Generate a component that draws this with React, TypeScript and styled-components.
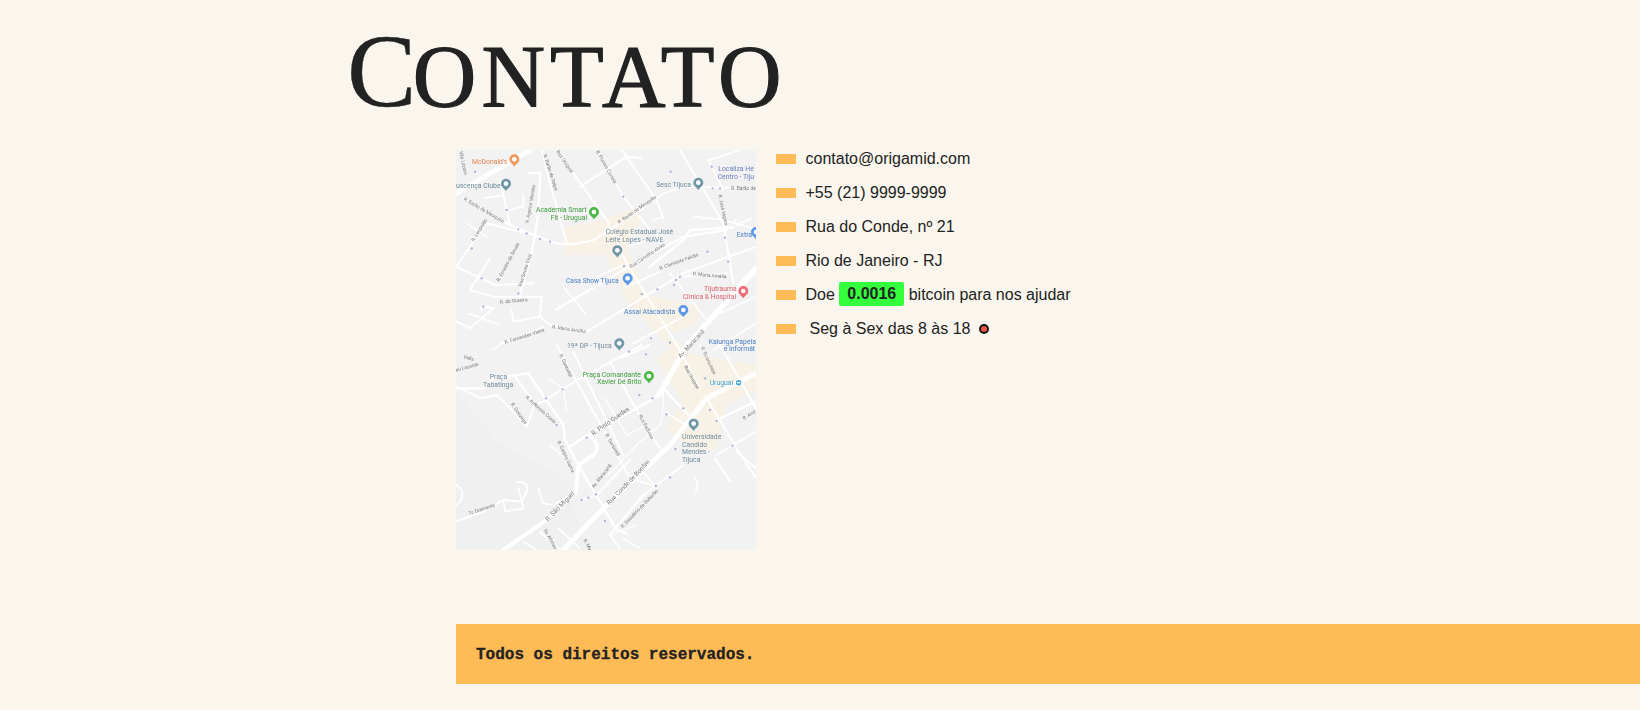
import React from "react";
import styled, { createGlobalStyle } from "styled-components";

const Global = createGlobalStyle`
  html, body { margin: 0; padding: 0; background: #faf6ed; }
  body { font-family: "Liberation Sans", Arial, sans-serif; color: #222; height: 710px; overflow: hidden; }
`;

const Page = styled.div`
  display: flex;
  flex-direction: column;
  width: 1640px;
  height: 710px;
`;

const Title = styled.h1`
  margin: 0;
  height: 150px;
  padding: 21px 0 0 347px;
  box-sizing: border-box;
  font-family: "Liberation Serif", "Times New Roman", serif;
  font-weight: 400;
  font-size: 88px;
  line-height: 100px;
  letter-spacing: 5.1px;
  color: #222;
  -webkit-text-stroke: 1.2px #222;
  text-transform: uppercase;
  white-space: nowrap;
`;

const Initial = styled.span`
  font-size: 104px;
  letter-spacing: -3.6px;
  -webkit-text-stroke: 0.4px #222;
`;

const Content = styled.section`
  display: flex;
  gap: 20px;
  padding-left: 456px;
`;

const MapFrame = styled.div`
  width: 300px;
  height: 400px;
  flex: none;
  background: #f2f2f2;
`;

const MapSvg = styled.svg`
  display: block;
  width: 300px;
  height: 400px;
  filter: blur(0.35px);
`;

const List = styled.ul`
  display: flex;
  flex-direction: column;
  gap: 16px;
  list-style: none;
  margin: 0;
  padding: 0;
  font-size: 16px;
`;

const Row = styled.li`
  display: flex;
  align-items: center;
  gap: 9.5px;
  height: 18px;
  line-height: 20px;
  white-space: pre;
  &::before {
    content: "";
    width: 20px;
    height: 10px;
    background: #ffbb55;
    flex: none;
  }
`;

const RowText = styled.span`
  display: inline-block;
`;

const Price = styled.span`
  display: inline-block;
  padding: 2px 8px;
  background: #33ff3c;
  border-radius: 2px;
  font-weight: 700;
  position: relative;
  top: -1px;
`;

const HoursText = styled.span`
  padding-left: 4px;
`;

const Dot = styled.span`
  width: 10px;
  height: 10px;
  box-sizing: border-box;
  border: 2px solid #111;
  background: #ee5544;
  border-radius: 50%;
  margin-left: -1px;
  flex: none;
`;

const Footer = styled.footer`
  display: flex;
  align-items: center;
  height: 60px;
  margin: 74px 0 0 456px;
  padding: 2px 0 0 20px;
  box-sizing: border-box;
  background: #ffbb55;
  font-family: "Liberation Mono", "Courier New", monospace;
  font-size: 16px;
  font-weight: 700;
  color: #222;
  -webkit-text-stroke: 0.3px #222;
`;

const roadsA: [string, number][] = [
  ["M18,160 L240,30", 15],
  ["M700,630 L918,385", 17],
  ["M40,175 L180,255 L300,305 Q350,322 430,300 L510,250 L640,160 L700,140 L918,145", 6],
  ["M320,30 L470,240 L530,370 L690,630", 6],
  ["M275,30 L300,130 L350,310", 6],
  ["M440,30 L520,170 L600,270", 6],
  ["M515,30 L620,180 L640,235", 6],
  ["M390,140 L530,50 L575,55", 6],
  ["M690,30 L820,250 L850,430", 6],
  ["M775,60 L820,150", 6],
  ["M780,60 L870,30", 5],
  ["M235,100 L272,98 L265,210 Q258,310 205,480", 7],
  ["M150,120 L180,255", 6],
  ["M100,175 L160,165", 5],
  ["M180,210 L220,200 L220,165", 5],
  ["M18,380 L135,435 L250,430", 6],
  ["M18,380 L110,250 L230,280", 6],
  ["M50,250 L110,290", 5],
  ["M120,355 L60,450 L130,470 L275,470", 6],
  ["M275,470 L270,530 L300,555 L410,575 L700,400 L918,320", 6],
  ["M90,510 L100,500 L130,505 L60,565 L20,545", 6],
  ["M55,520 L150,555", 5],
  ["M185,510 L190,545 L270,530", 5],
  ["M320,508 L530,385 L700,290 L830,270", 7],
  ["M340,440 L405,520", 5],
  ["M440,410 L520,375", 5],
  ["M520,445 L630,395", 5],
  ["M600,380 L700,300 L720,270 L850,262", 7],
  ["M735,230 L820,240 L910,265", 5],
  ["M855,240 L860,255 L905,235", 5],
  ["M700,410 L830,400", 5],
  ["M660,400 L770,540", 5],
  ["M810,520 L918,470", 5],
  ["M790,630 L918,550", 5],
  ["M160,610 L200,595 L280,560", 5],
  ["M130,630 L160,605", 5],
  ["M550,610 L700,530", 5],
  ["M530,320 L640,290", 4],
  ["M610,240 L640,230", 4],
];

const roadsB: [string, number][] = [
  ["M340,615 L470,480 L660,300 L770,160 L918,85", 15],
  ["M715,-5 L650,110 L625,150", 16],
  ["M630,150 L560,190 L405,275 L360,305", 8],
  ["M422,270 Q455,305 430,330 L385,360 L378,440 L290,525 L160,615", 12],
  ["M320,0 L540,400 L620,425", 6],
  ["M370,20 L520,330", 6],
  ["M480,50 L590,250 L630,310", 6],
  ["M510,40 L600,0", 6],
  ["M18,130 L100,130 L130,100 L235,85 L340,240 L345,285 L385,360 L500,555 L530,565", 7],
  ["M195,95 L255,175 L230,245 L190,200 L140,150 L95,160 L20,125", 6],
  ["M260,180 L375,110 L575,0", 6],
  ["M300,105 L340,130 L350,200", 4],
  ["M640,130 L720,215", 7],
  ["M770,160 L860,310 L918,400", 6],
  ["M650,205 L700,235", 5],
  ["M800,225 L918,170", 6],
  ["M810,0 L918,190", 6],
  ["M800,330 L850,300 L918,260", 6],
  ["M795,340 L840,410", 6],
  ["M860,320 L918,370", 6],
  ["M640,130 Q640,220 630,240 L570,290 L470,395", 4],
  ["M530,270 L590,240", 4],
  ["M465,160 L530,270", 4],
  ["M680,0 L750,130", 5],
  ["M750,0 L780,60", 4],
  ["M580,380 L620,430", 5],
  ["M700,360 L580,450 L480,570 L510,610", 6],
  ["M735,400 Q750,420 735,440", 4],
  ["M395,465 L440,450 L540,345", 6],
  ["M200,410 Q240,410 230,440 L215,470 L160,465 L100,500 L18,530", 6],
  ["M160,465 L165,500 L220,490 L205,430", 5],
  ["M265,430 L280,475 L310,480 L380,440", 5],
  ["M270,560 L330,615", 5],
  ["M220,590 L260,615", 5],
  ["M325,550 L390,610", 5],
  ["M520,580 L570,610", 4],
  ["M18,420 Q50,440 30,470 L18,480", 5],
  ["M300,300 L360,350", 4],
  ["M480,570 L560,540", 3],
];

/* text, x, y, colour, rotation, size */
type Lbl = [string, number, number, string, number, number];

const poi = "#6f8b9b";
const grn = "#3c9c3c";
const blu = "#4a80c8";
const pnk = "#d9626c";
const st = "#777";

const labelsA: Lbl[] = [
  ["McDonald's", 66, 71, "#e2854f", 0, 20.5],
  ["uscença Clube", 18, 143, poi, 0, 20.5],
  ["Academia Smart", 258, 217, grn, 0, 20.5],
  ["Fit - Uruguai", 302, 240, grn, 0, 20.5],
  ["Colégio Estadual José", 467, 283, poi, 0, 20.5],
  ["Leite Lopes - NAVE", 467, 306, poi, 0, 20.5],
  ["Sesc Tijuca", 619, 141, poi, 0, 20.5],
  ["Localiza He", 805, 93, "#6c7fc0", 0, 20.5],
  ["Centro - Tiju", 803, 116, "#6c7fc0", 0, 20.5],
  ["Extra", 860, 291, blu, 0, 20.5],
  ["Casa Show Tijuca", 348, 428, blu, 0, 20],
  ["Tijutrauma", 762, 452, pnk, 0, 20.5],
  ["Clínica & Hospital", 698, 476, pnk, 0, 20.5],
  ["Assaí Atacadista", 522, 521, blu, 0, 20.5],
  ["19ª DP - Tijuca", 351, 623, poi, 0, 20.5],
  ["Kalunga Papela", 776, 611, blu, 0, 20.5],
  ["R. Barão de Mesquita", 40, 180, st, 30, 14.5],
  ["R. Barão de Mesquita", 508, 252, st, -35, 14.5],
  ["R. Barão de Itaipu", 280, 45, st, 72, 14.5],
  ["Rua Uruguai", 318, 35, st, 55, 14.5],
  ["R. Pontes Correia", 437, 35, st, 60, 14.5],
  ["R. Agenor Moreira", 236, 250, st, -80, 14.5],
  ["R. Leopoldo", 72, 305, st, -58, 14.5],
  ["R. Ernesto de Souza", 148, 425, st, -62, 14.5],
  ["Rua Sousa Cruz", 214, 440, st, -72, 14.5],
  ["R. do Outeiro", 150, 491, st, -5, 14.5],
  ["R. Fernandes Vieira", 166, 612, st, -18, 14.5],
  ["R. Maria Amália", 306, 565, st, 8, 14.5],
  ["Rua Carvalho Alvim", 542, 385, st, -33, 14.5],
  ["R. Clemente Falcão", 630, 390, st, -20, 14.5],
  ["R. Maria Amália", 728, 406, st, 5, 14.5],
  ["R. José Higino", 805, 165, st, 78, 14.5],
  ["R. Barão de", 844, 150, st, 0, 14.5],
  ["Vila Lázaro", 28, 35, st, 78, 14.5],
];

const labelsB: Lbl[] = [
  ["e Informát", 821, 19, blu, 0, 20.5],
  ["Praça Comandante", 398, 95, grn, 0, 20.5],
  ["Xavier De Brito", 441, 118, grn, 0, 20.5],
  ["Praça", 119, 102, poi, 0, 20.5],
  ["Tabatinga", 99, 125, poi, 0, 20.5],
  ["Uruguai", 779, 120, "#3ea4d8", 0, 20.5],
  ["Universidade", 696, 282, poi, 0, 20.5],
  ["Candido", 696, 305, poi, 0, 20.5],
  ["Mendes -", 696, 328, poi, 0, 20.5],
  ["Tijuca", 696, 351, poi, 0, 20.5],
  ["Av. Maracanã", 692, 40, st, -48, 18],
  ["Rua Uruguai", 702, 65, st, 60, 14.5],
  ["R. Garibaldi", 328, 30, st, 65, 14.5],
  ["R. Guaraciaba", 752, 8, st, 65, 14.5],
  ["R. Pinto Guedes", 430, 272, st, -35, 19],
  ["R. Garibaldi", 465, 270, st, 60, 14.5],
  ["Rua Radiosa", 566, 212, st, 62, 14.5],
  ["R. Gonzaga", 182, 178, st, 55, 14.5],
  ["R. Amoroso Costa", 226, 158, st, 42, 14.5],
  ["R. Carijós Gama", 322, 290, st, 65, 14.5],
  ["Av. Maracanã", 432, 430, st, -52, 14.5],
  ["Rua Conde de Bonfim", 478, 480, st, -46, 18.5],
  ["R. São Miguel", 294, 530, st, -46, 19],
  ["R. Desidério de Dubarbo", 518, 550, st, -46, 14.5],
  ["Tr. Diamante", 58, 510, st, -18, 14.5],
  ["Tv. Afonso", 280, 555, st, 60, 14.5],
  ["R. Ma", 400, 585, st, 62, 14.5],
  ["R. And", 882, 225, st, -32, 14.5],
  ["Valls", 40, 40, st, 15, 14.5],
  ["eu Lacerda", 18, 80, st, -15, 14.5],
];

const pinsA: [number, number, string][] = [
  [193, 60, "#f0985c"],
  [168, 133, "#6f97a8"],
  [432, 218, "#4cb848"],
  [745, 130, "#6f97a8"],
  [502, 333, "#6f97a8"],
  [533, 417, "#5a98e8"],
  [880, 455, "#ee6a74"],
  [700, 512, "#5a98e8"],
  [508, 612, "#6f97a8"],
  [918, 278, "#5a98e8"],
];

const pinsB: [number, number, string][] = [
  [597, 95, "#4cb848"],
  [731, 238, "#6f97a8"],
];

const arrowsA: [number, number][] = [
  [75, 95], [170, 210], [205, 268], [230, 280], [270, 297], [300, 305], [95, 415], [65, 325],
  [205, 460], [100, 500], [520, 170], [662, 95], [785, 80], [788, 145], [810, 145], [825, 293],
  [835, 365], [575, 462], [622, 448], [678, 420], [672, 435], [690, 410], [772, 335], [603, 595],
  [660, 608], [522, 378],
];

const arrowsB: [number, number][] = [
  [537, 20], [588, 28], [338, 133], [288, 160], [258, 178], [568, 150], [608, 160], [700, 190],
  [780, 195], [800, 228], [848, 302], [320, 240], [410, 278], [650, 208], [676, 312], [660, 397],
  [618, 423], [465, 528], [395, 465], [415, 458], [438, 448], [765, 100],
];

const Pin = ({ x, y, c }: { x: number; y: number; c: string }) => (
  <g transform={`translate(${x},${y})`}>
    <path d="M0,20 C-4,12 -15,8 -15,-2 A15,15 0 1 1 15,-2 C15,8 4,12 0,20Z" fill={c} />
    <circle cx={0} cy={-2} r={7} fill="#fff" />
  </g>
);

const Layer = ({
  dy,
  roads,
  labels,
  pins,
  arrows,
  children,
}: {
  dy: number;
  roads: [string, number][];
  labels: Lbl[];
  pins: [number, number, string][];
  arrows: [number, number][];
  children?: React.ReactNode;
}) => (
  <g transform={`translate(-6,${dy}) scale(0.3333)`}>
    {roads.map(([d, w], i) => (
      <path key={i} d={d} fill="none" stroke="#fff" strokeWidth={w} strokeLinejoin="round" strokeLinecap="round" />
    ))}
    {arrows.map(([x, y], i) => (
      <circle key={i} cx={x} cy={y} r={3.5} fill="#a8b2d6" />
    ))}
    {labels.map(([t, x, y, c, r, s], i) => (
      <text key={i} x={x} y={y} fill={c} fontSize={s} fontFamily="Roboto, sans-serif" transform={`rotate(${r} ${x} ${y})`}>
        {t}
      </text>
    ))}
    {pins.map(([x, y, c], i) => (
      <Pin key={i} x={x} y={y} c={c} />
    ))}
    {children}
  </g>
);

const MapDrawing = () => (
  <MapSvg viewBox="0 0 300 400">
    <rect width="300" height="400" fill="#f2f2f2" />
    <path
      d="M107,78 L146,70 L180,57 L186,70 L170,95 L190,145 L246,157 L240,175 L210,185 L235,200 L220,205 L170,150 L150,105 L107,105Z"
      fill="#f8f2e6"
    />
    <path
      d="M210,200 L300,215 L300,240 L270,255 L260,300 L240,300 L210,280 L225,250 L200,210Z"
      fill="#f8f2e6"
    />
    <path d="M0,240 L40,290 L110,330 L130,400 L0,400Z" fill="#f0f0f0" />
    <Layer dy={-10} roads={roadsA} labels={labelsA} pins={pinsA} arrows={arrowsA} />
    <Layer dy={195} roads={roadsB} labels={labelsB} pins={pinsB} arrows={arrowsB}>
      <circle cx={866} cy={113} r={8} fill="#3ea4d8" />
      <rect x={861} y={111} width={10} height={4} fill="#fff" />
    </Layer>
  </MapSvg>
);

export default function App() {
  return (
    <Page>
      <Global />
      <Title>
        <Initial>C</Initial>ontato
      </Title>
      <Content>
        <MapFrame>
          <MapDrawing />
        </MapFrame>
        <List>
          <Row>contato@origamid.com</Row>
          <Row>+55 (21) 9999-9999</Row>
          <Row>Rua do Conde, nº 21</Row>
          <Row>Rio de Janeiro - RJ</Row>
          <Row>
            <RowText>
              Doe <Price>0.0016</Price> bitcoin para nos ajudar
            </RowText>
          </Row>
          <Row>
            <HoursText>Seg à Sex das 8 às 18</HoursText>
            <Dot />
          </Row>
        </List>
      </Content>
      <Footer>Todos os direitos reservados.</Footer>
    </Page>
  );
}
